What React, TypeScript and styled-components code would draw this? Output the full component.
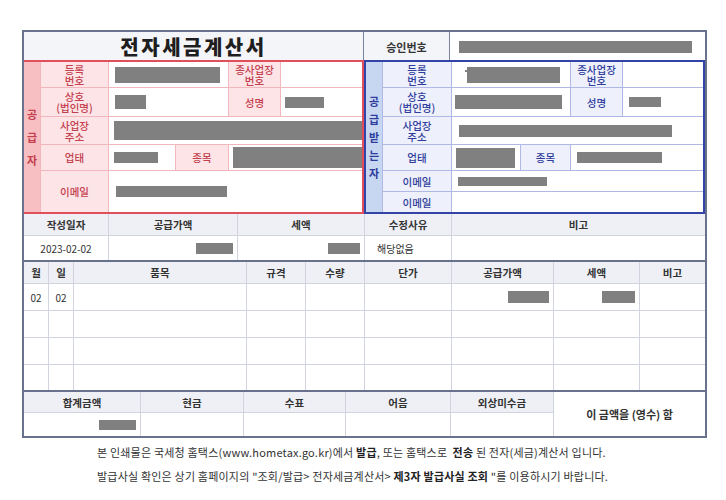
import React from "react";
import styled, { createGlobalStyle, css } from "styled-components";

const GlobalStyle = createGlobalStyle`
  html, body { margin: 0; padding: 0; background: #ffffff; }
  body {
    font-family: "Noto Sans CJK KR", "Noto Sans", "Liberation Sans", sans-serif;
    color: #333333;
  }
  * { box-sizing: border-box; }
`;

type Tone = "red" | "blue";

const tones = {
  red: {
    border: "#df4f5c",
    line: "#f2b7bc",
    label: "#fde4e6",
    band: "#f8bfc3",
    text: "#c4404e",
  },
  blue: {
    border: "#3444a6",
    line: "#b0b8e6",
    label: "#eef0fb",
    band: "#c7d7f2",
    text: "#2e3d9c",
  },
};

const Page = styled.div`
  padding: 30px 0 0 22px;
`;

const Invoice = styled.div`
  width: 685px;
  border: 2px solid #68728c;
  background: #ffffff;
`;

const TitleRow = styled.div`
  display: grid;
  grid-template-columns: 340px 86px 1fr;
  height: 28px;
  background: #f4f5f8;
`;

const Title = styled.div`
  display: flex;
  align-items: center;
  justify-content: center;
  font-size: 20px;
  font-weight: 900;
  letter-spacing: 2.5px;
  color: #1e1e1e;
  border-right: 1px solid #7a84a0;
`;

const TitleLabel = styled.div`
  display: flex;
  align-items: center;
  justify-content: center;
  font-size: 11px;
  font-weight: 700;
  color: #333333;
  border-right: 1px solid #7a84a0;
`;

const TitleValue = styled.div`
  display: flex;
  align-items: center;
  padding-left: 9px;
  background: #ffffff;
`;

const Parties = styled.div`
  display: flex;
`;

const Party = styled.div<{ $tone: Tone; $w?: number }>`
  ${({ $tone, $w }) => css`
    ${$w ? `width: ${$w}px;` : "flex: 1;"}
    display: grid;
    grid-template-columns: ${$tone === "red"
      ? "16px 67px 66px 52px 51px 1fr"
      : "16px 68px 68px 49px 51px 1fr"};
    grid-template-rows: 25px 28px 27px 25px 20px 20px;
    gap: 1px;
    background: ${tones[$tone].line};
    border-top: 2px solid ${tones[$tone].border};
    border-bottom: 2px solid ${tones[$tone].border};
    border-right: 2px solid ${tones[$tone].border};
    ${$tone === "blue" ? `border-left: 2px solid ${tones[$tone].border};` : ""}
  `}
`;

const Band = styled.div<{ $tone: Tone; $gap: number }>`
  grid-row: 1 / span 6;
  display: flex;
  flex-direction: column;
  align-items: center;
  justify-content: center;
  gap: ${({ $gap }) => $gap}px;
  background: ${({ $tone }) => tones[$tone].band};
  color: ${({ $tone }) => tones[$tone].text};
  font-size: 11px;
  font-weight: 700;
  line-height: 12px;
`;

const PartyLabel = styled.div<{ $tone: Tone; $rows?: number }>`
  ${({ $rows }) => ($rows ? `grid-row: span ${$rows};` : "")}
  display: flex;
  align-items: center;
  justify-content: center;
  text-align: center;
  background: ${({ $tone }) => tones[$tone].label};
  color: ${({ $tone }) => tones[$tone].text};
  font-size: 10.5px;
  line-height: 11px;
  font-weight: 500;
  white-space: pre-line;
`;

const PartyValue = styled.div<{ $span?: number; $rows?: number; $pad?: number }>`
  ${({ $span }) => ($span ? `grid-column: span ${$span};` : "")}
  ${({ $rows }) => ($rows ? `grid-row: span ${$rows};` : "")}
  display: flex;
  align-items: center;
  padding-left: ${({ $pad }) => $pad ?? 6}px;
  background: #ffffff;
  overflow: hidden;
`;

const Table = styled.div<{ $cols: string; $rows: string; $thick?: boolean }>`
  display: grid;
  grid-template-columns: ${({ $cols }) => $cols};
  grid-template-rows: ${({ $rows }) => $rows};
  gap: 1px;
  background: #cfd4df;
  ${({ $thick }) => ($thick ? "border-top: 2px solid #68728c;" : "")}
`;

const HeadCell = styled.div`
  display: flex;
  align-items: center;
  justify-content: center;
  background: #eef0f5;
  font-size: 10.5px;
  font-weight: 700;
  color: #333333;
`;

const DataCell = styled.div<{ $align?: "left" | "center" | "right"; $rows?: number; $bold?: boolean }>`
  ${({ $rows }) => ($rows ? `grid-row: span ${$rows};` : "")}
  display: flex;
  align-items: center;
  justify-content: ${({ $align }) =>
    $align === "left" ? "flex-start" : $align === "right" ? "flex-end" : "center"};
  padding: ${({ $align }) => ($align === "left" ? "0 0 0 12px" : $align === "right" ? "0 4px 0 0" : "0")};
  background: #ffffff;
  font-size: ${({ $bold }) => ($bold ? "11px" : "10px")};
  font-weight: ${({ $bold }) => ($bold ? 700 : 400)};
  color: #333333;
`;

const Redact = styled.span<{ $w: number; $h: number; $dx?: number }>`
  display: inline-block;
  flex: none;
  width: ${({ $w }) => $w}px;
  height: ${({ $h }) => $h}px;
  margin-left: ${({ $dx }) => $dx ?? 0}px;
  background: #808080;
`;

const Notes = styled.div`
  padding: 6px 0 0 75px;
  display: flex;
  flex-direction: column;
  gap: 8px;
  font-size: 11px;
  line-height: 16px;
  letter-spacing: 0.2px;
  color: #333333;
  font-family: "Noto Sans CJK KR", "Noto Sans", sans-serif;
`;

const NoteLine = styled.div`
  white-space: pre;
`;

const Strong = styled.b`
  font-weight: 700;
  color: #222222;
`;

const Tick = styled.span`
  display: inline-block;
  width: 2px;
  height: 2px;
  background: #808080;
  align-self: flex-start;
  margin-top: 8px;
`;

function Supplier() {
  const t: Tone = "red";
  return (
    <Party $tone={t} $w={340}>
      <Band $tone={t} $gap={11}>
        <span>공</span>
        <span>급</span>
        <span>자</span>
      </Band>
      <PartyLabel $tone={t}>{"등록\n번호"}</PartyLabel>
      <PartyValue $span={2}>
        <Redact $w={105} $h={16} />
      </PartyValue>
      <PartyLabel $tone={t}>{"종사업장\n번호"}</PartyLabel>
      <PartyValue />
      <PartyLabel $tone={t}>{"상호\n(법인명)"}</PartyLabel>
      <PartyValue $span={2}>
        <Redact $w={31} $h={14} />
      </PartyValue>
      <PartyLabel $tone={t}>성명</PartyLabel>
      <PartyValue $pad={4}>
        <Redact $w={39} $h={11} />
      </PartyValue>
      <PartyLabel $tone={t}>{"사업장\n주소"}</PartyLabel>
      <PartyValue $span={4} $pad={5}>
        <Redact $w={250} $h={19} />
      </PartyValue>
      <PartyLabel $tone={t}>업태</PartyLabel>
      <PartyValue $pad={5}>
        <Redact $w={44} $h={11} />
      </PartyValue>
      <PartyLabel $tone={t}>종목</PartyLabel>
      <PartyValue $span={2} $pad={4}>
        <Redact $w={131} $h={21} />
      </PartyValue>
      <PartyLabel $tone={t} $rows={2}>
        이메일
      </PartyLabel>
      <PartyValue $span={4} $rows={2} $pad={7}>
        <Redact $w={111} $h={11} />
      </PartyValue>
    </Party>
  );
}

function Receiver() {
  const t: Tone = "blue";
  return (
    <Party $tone={t}>
      <Band $tone={t} $gap={6}>
        <span>공</span>
        <span>급</span>
        <span>받</span>
        <span>는</span>
        <span>자</span>
      </Band>
      <PartyLabel $tone={t}>{"등록\n번호"}</PartyLabel>
      <PartyValue $span={2} $pad={13}>
        <Tick />
        <Redact $w={93} $h={16} />
      </PartyValue>
      <PartyLabel $tone={t}>{"종사업장\n번호"}</PartyLabel>
      <PartyValue />
      <PartyLabel $tone={t}>{"상호\n(법인명)"}</PartyLabel>
      <PartyValue $span={2} $pad={3}>
        <Redact $w={107} $h={14} />
      </PartyValue>
      <PartyLabel $tone={t}>성명</PartyLabel>
      <PartyValue $pad={6}>
        <Redact $w={32} $h={10} />
      </PartyValue>
      <PartyLabel $tone={t}>{"사업장\n주소"}</PartyLabel>
      <PartyValue $span={4} $pad={7}>
        <Redact $w={213} $h={12} />
      </PartyValue>
      <PartyLabel $tone={t}>업태</PartyLabel>
      <PartyValue $pad={4}>
        <Redact $w={59} $h={20} />
      </PartyValue>
      <PartyLabel $tone={t}>종목</PartyLabel>
      <PartyValue $span={2} $pad={6}>
        <Redact $w={85} $h={11} />
      </PartyValue>
      <PartyLabel $tone={t}>이메일</PartyLabel>
      <PartyValue $span={4} $pad={6}>
        <Redact $w={89} $h={9} />
      </PartyValue>
      <PartyLabel $tone={t}>이메일</PartyLabel>
      <PartyValue $span={4} />
    </Party>
  );
}

const itemCols = "24px 24px 172px 58px 58px 86px 101px 85px 1fr";
const itemHeads = ["월", "일", "품목", "규격", "수량", "단가", "공급가액", "세액", "비고"];

export default function App() {
  return (
    <>
      <GlobalStyle />
      <Page>
        <Invoice>
          <TitleRow>
            <Title>전자세금계산서</Title>
            <TitleLabel>승인번호</TitleLabel>
            <TitleValue>
              <Redact $w={233} $h={12} />
            </TitleValue>
          </TitleRow>
          <Parties>
            <Supplier />
            <Receiver />
          </Parties>
          <Table $cols="84px 128px 126px 86px 1fr" $rows="21px 24px">
            <HeadCell>작성일자</HeadCell>
            <HeadCell>공급가액</HeadCell>
            <HeadCell>세액</HeadCell>
            <HeadCell>수정사유</HeadCell>
            <HeadCell>비고</HeadCell>
            <DataCell>2023-02-02</DataCell>
            <DataCell $align="right">
              <Redact $w={37} $h={11} />
            </DataCell>
            <DataCell $align="right">
              <Redact $w={32} $h={11} />
            </DataCell>
            <DataCell $align="left">해당없음</DataCell>
            <DataCell />
          </Table>
          <Table $thick $cols={itemCols} $rows="21px 26px 26px 26px 25px">
            {itemHeads.map((h) => (
              <HeadCell key={h}>{h}</HeadCell>
            ))}
            <DataCell>02</DataCell>
            <DataCell>02</DataCell>
            <DataCell />
            <DataCell />
            <DataCell />
            <DataCell />
            <DataCell $align="right">
              <Redact $w={41} $h={12} />
            </DataCell>
            <DataCell $align="right">
              <Redact $w={33} $h={12} />
            </DataCell>
            <DataCell />
            {Array.from({ length: 27 }).map((_, i) => (
              <DataCell key={i} />
            ))}
          </Table>
          <Table $thick $cols="116px 102px 101px 104px 102px 1fr" $rows="20px 23px">
            <HeadCell>합계금액</HeadCell>
            <HeadCell>현금</HeadCell>
            <HeadCell>수표</HeadCell>
            <HeadCell>어음</HeadCell>
            <HeadCell>외상미수금</HeadCell>
            <DataCell $rows={2} $bold>
              이 금액을 (영수) 함
            </DataCell>
            <DataCell $align="right">
              <Redact $w={37} $h={10} />
            </DataCell>
            <DataCell />
            <DataCell />
            <DataCell />
            <DataCell />
          </Table>
        </Invoice>
        <Notes>
          <NoteLine>
            본 인쇄물은 국세청 홈택스(www.hometax.go.kr)에서 <Strong>발급</Strong>, 또는 홈택스로{"  "}
            <Strong>전송</Strong> 된 전자(세금)계산서 입니다.
          </NoteLine>
          <NoteLine>
            발급사실 확인은 상기 홈페이지의 "조회/발급&gt; 전자세금계산서&gt; <Strong>제3자 발급사실 조회</Strong> "를
            이용하시기 바랍니다.
          </NoteLine>
        </Notes>
      </Page>
    </>
  );
}
